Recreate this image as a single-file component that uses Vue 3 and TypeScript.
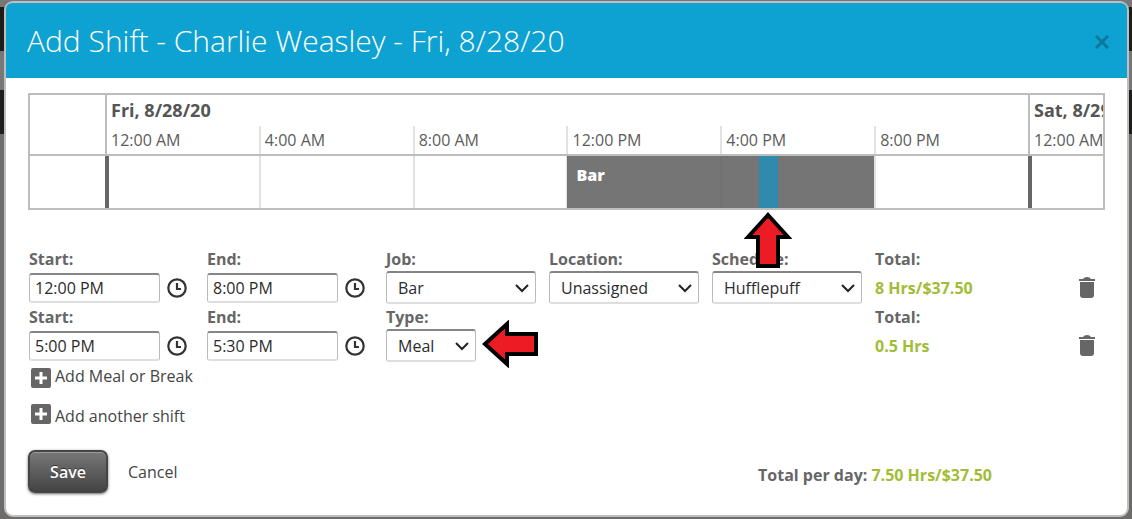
<script setup lang="ts">
import { ref } from 'vue'

interface Slot { label: string; day?: string }

const slots: Slot[] = [
  { label: '12:00 AM', day: 'Fri, 8/28/20' },
  { label: '4:00 AM' },
  { label: '8:00 AM' },
  { label: '12:00 PM' },
  { label: '4:00 PM' },
  { label: '8:00 PM' },
  { label: '12:00 AM', day: 'Sat, 8/29/20' },
]

const shift = { start: 12, end: 20 }
const meal = { start: 17, end: 17.5 }
const shiftHours = shift.end - shift.start
const mealStyle = {
  left: `${((meal.start - shift.start) / shiftHours) * 100}%`,
  width: `${((meal.end - meal.start) / shiftHours) * 100}%`,
}

const shiftStart = ref('12:00 PM')
const shiftEnd = ref('8:00 PM')
const mealStart = ref('5:00 PM')
const mealEnd = ref('5:30 PM')
const job = ref('Bar')
const location = ref('Unassigned')
const schedule = ref('Hufflepuff')
const breakType = ref('Meal')
</script>

<template>
  <div class="backdrop">
    <section class="modal" role="dialog" aria-labelledby="modal-title">
      <header class="modal-header">
        <h1 id="modal-title">Add Shift - Charlie Weasley - Fri, 8/28/20</h1>
        <button class="close" type="button" aria-label="Close">
          <svg width="14" height="14" viewBox="0 0 14 14"><path d="M1 1L13 13M13 1L1 13" fill="none" stroke="currentColor" stroke-width="3" /></svg>
        </button>
      </header>

      <form class="modal-body" @submit.prevent>
        <div class="timeline">
          <div class="lane scale">
            <div class="corner"></div>
            <div v-for="(slot, i) in slots" :key="i" class="slot" :class="{ day: slot.day }">
              <strong v-if="slot.day">{{ slot.day }}</strong>
              <span class="hour">{{ slot.label }}</span>
            </div>
          </div>
          <div class="lane track">
            <div class="corner"></div>
            <div v-for="(slot, i) in slots" :key="i" class="cell" :class="{ day: slot.day }" :style="{ gridColumn: i + 2 }"></div>
            <div class="shift-bar">
              Bar
              <div class="meal" :style="mealStyle">
                <svg class="arrow-up" width="48" height="57" viewBox="0 0 48 57"><path d="M24 3L44 25H34V54H14V25H4Z" fill="#ed1c24" stroke="#000" stroke-width="4" /></svg>
              </div>
            </div>
          </div>
        </div>

        <div class="entries">
          <div class="entry">
            <div class="field">
              <label for="shift-start">Start:</label>
              <div class="control time">
                <input id="shift-start" v-model="shiftStart" type="text" />
                <svg class="clock" width="20" height="20" viewBox="0 0 20 20"><circle cx="10" cy="10" r="8.7" /><path d="M10 5V11H14" /></svg>
              </div>
            </div>
            <div class="field">
              <label for="shift-end">End:</label>
              <div class="control time">
                <input id="shift-end" v-model="shiftEnd" type="text" />
                <svg class="clock" width="20" height="20" viewBox="0 0 20 20"><circle cx="10" cy="10" r="8.7" /><path d="M10 5V11H14" /></svg>
              </div>
            </div>
            <div class="field">
              <label for="job">Job:</label>
              <div class="control pick">
                <select id="job" v-model="job"><option>Bar</option></select>
                <svg class="chevron" width="14" height="9" viewBox="0 0 14 9"><path d="M1 1L7 7L13 1" /></svg>
              </div>
            </div>
            <div class="field">
              <label for="location">Location:</label>
              <div class="control pick">
                <select id="location" v-model="location"><option>Unassigned</option></select>
                <svg class="chevron" width="14" height="9" viewBox="0 0 14 9"><path d="M1 1L7 7L13 1" /></svg>
              </div>
            </div>
            <div class="field">
              <label for="schedule">Schedule:</label>
              <div class="control pick">
                <select id="schedule" v-model="schedule"><option>Hufflepuff</option></select>
                <svg class="chevron" width="14" height="9" viewBox="0 0 14 9"><path d="M1 1L7 7L13 1" /></svg>
              </div>
            </div>
            <div class="field">
              <span class="caption">Total:</span>
              <div class="control total">8 Hrs/$37.50</div>
            </div>
            <button class="trash" type="button" aria-label="Delete shift">
              <svg width="16" height="21" viewBox="0 0 16 21"><path d="M0 2H4Q5 0 8 0T12 2H16V4H0ZM1 5H15V18Q15 21 12 21H4Q1 21 1 18Z" /></svg>
            </button>
          </div>

          <div class="entry">
            <div class="field">
              <label for="meal-start">Start:</label>
              <div class="control time">
                <input id="meal-start" v-model="mealStart" type="text" />
                <svg class="clock" width="20" height="20" viewBox="0 0 20 20"><circle cx="10" cy="10" r="8.7" /><path d="M10 5V11H14" /></svg>
              </div>
            </div>
            <div class="field">
              <label for="meal-end">End:</label>
              <div class="control time">
                <input id="meal-end" v-model="mealEnd" type="text" />
                <svg class="clock" width="20" height="20" viewBox="0 0 20 20"><circle cx="10" cy="10" r="8.7" /><path d="M10 5V11H14" /></svg>
              </div>
            </div>
            <div class="field">
              <label for="break-type">Type:</label>
              <div class="control pick short">
                <select id="break-type" v-model="breakType"><option>Meal</option><option>Break</option></select>
                <svg class="chevron" width="14" height="9" viewBox="0 0 14 9"><path d="M1 1L7 7L13 1" /></svg>
                <svg class="arrow-left" width="57" height="48" viewBox="0 0 57 48"><path d="M3 24L25 4V14H54V34H25V44Z" fill="#ed1c24" stroke="#000" stroke-width="4" /></svg>
              </div>
            </div>
            <div class="field summary">
              <span class="caption">Total:</span>
              <div class="control total">0.5 Hrs</div>
            </div>
            <button class="trash" type="button" aria-label="Delete meal">
              <svg width="16" height="21" viewBox="0 0 16 21"><path d="M0 2H4Q5 0 8 0T12 2H16V4H0ZM1 5H15V18Q15 21 12 21H4Q1 21 1 18Z" /></svg>
            </button>
          </div>
        </div>

        <div class="adders">
          <button class="add low" type="button">
            <svg width="20" height="20" viewBox="0 0 20 20"><rect width="20" height="20" rx="2" fill="#666" /><path d="M10 4V16M4 10H16" stroke="#fff" stroke-width="3" /></svg>
            <span>Add Meal or Break</span>
          </button>
          <button class="add" type="button">
            <svg width="20" height="20" viewBox="0 0 20 20"><rect width="20" height="20" rx="2" fill="#666" /><path d="M10 4V16M4 10H16" stroke="#fff" stroke-width="3" /></svg>
            <span>Add another shift</span>
          </button>
        </div>

        <footer class="actions">
          <button class="save" type="submit">Save</button>
          <a class="cancel" href="#">Cancel</a>
          <p class="day-total">Total per day: <span>7.50 Hrs/$37.50</span></p>
        </footer>
      </form>
    </section>
  </div>
</template>

<style>
body {
  margin: 0;
}
</style>

<style scoped>
* {
  box-sizing: border-box;
}
.backdrop {
  min-height: 100vh;
  padding: 1px 3px 2px 4px;
  background: linear-gradient(#777 7px, #1f1d1b 7px 51px, #777 51px 90px, #1f1d1b 90px 134px, #6d6c6b 134px);
  font-family: "Open Sans", "Noto Sans", sans-serif;
  font-size: 16px;
  line-height: 24px;
  color: #333;
}
.modal {
  border: 2px solid #bfbfbf;
  border-radius: 9px;
  background: #fff;
}
.modal-header {
  display: flex;
  align-items: center;
  justify-content: space-between;
  height: 75px;
  padding: 0 18px 0 21px;
  border-radius: 6px 6px 0 0;
  background: #0da2d1;
}
h1 {
  margin: 0;
  font-size: 30px;
  font-weight: 300;
  line-height: 40px;
  color: #fff;
}
.close {
  display: flex;
  margin-top: 3px;
  padding: 0;
  border: 0;
  background: none;
  color: #08799d;
}
.modal-body {
  padding: 15px 22px 22px;
}
.timeline {
  border: 2px solid #bdbdbd;
}
.lane {
  display: grid;
  grid-template-columns: 75px repeat(6, minmax(0, 1fr)) 75px;
}
.scale {
  height: 61px;
  border-bottom: 2px solid #bdbdbd;
  color: #555;
}
.slot {
  position: relative;
  display: flex;
  flex-direction: column;
  justify-content: flex-end;
  height: 28px;
  margin-top: 31px;
  padding: 0 0 2px 4px;
  border-left: 2px solid #e2e2e2;
  white-space: nowrap;
}
.slot.day {
  overflow: hidden;
  height: 59px;
  margin-top: 0;
  border-color: #bdbdbd;
}
.slot strong {
  margin-bottom: 6px;
  font-size: 18px;
  font-weight: 700;
}
.hour {
  color: #5c5c5c;
}
.track {
  height: 52px;
}
.track > * {
  grid-row: 1;
}
.cell {
  border-left: 2px solid #e2e2e2;
}
.cell.day {
  border-left: 4px solid #666;
}
.shift-bar {
  position: relative;
  grid-column: 5 / 7;
  margin-left: 1px;
  padding: 7px 9px;
  background: rgba(102, 102, 102, 0.9);
  color: #fff;
  font-weight: 800;
}
.meal {
  position: absolute;
  top: 0;
  bottom: 0;
  background: #308aad;
}
.arrow-up {
  position: absolute;
  top: calc(100% + 4px);
  left: 50%;
  margin-left: -25px;
}
.entries {
  margin: 37px 0 0 1px;
}
.entry {
  display: grid;
  grid-template-columns: 178px 179px repeat(3, 163px) 1fr auto;
  height: 58px;
}
.summary {
  grid-column: 6;
}
label,
.caption {
  display: block;
  font-weight: 700;
  color: #666;
}
.control {
  display: flex;
  align-items: center;
  height: 33px;
}
.time {
  gap: 7px;
}
input,
select {
  border: 1px solid #bbb;
  border-top: 2px solid #858585;
  border-bottom: 2px solid #dedede;
  border-radius: 3px;
  background: #fff;
  color: #2c2c2c;
  font: inherit;
}
input {
  width: 131px;
  height: 30px;
  padding: 0 5px;
}
.clock {
  fill: none;
  stroke: #333;
  stroke-width: 2.2;
}
.pick {
  position: relative;
  width: 150px;
}
.short {
  width: 90px;
}
select {
  width: 100%;
  height: 33px;
  padding: 0 11px;
  appearance: none;
}
.chevron {
  position: absolute;
  right: 7px;
  top: 13px;
  fill: none;
  stroke: #222;
  stroke-width: 2;
  pointer-events: none;
}
.arrow-left {
  position: absolute;
  left: calc(100% + 6px);
  top: -9px;
}
.total {
  font-weight: 700;
  color: #a1bd37;
}
.trash {
  align-self: end;
  margin-right: 10px;
  padding: 0 0 7px;
  border: 0;
  background: none;
  fill: #666;
}
.trash svg,
.add svg {
  display: block;
}
.adders {
  display: grid;
  justify-items: start;
  gap: 16px;
  margin: 1px 0 0 3px;
}
.add {
  display: flex;
  gap: 4px;
  padding: 0;
  border: 0;
  background: none;
  color: #444;
  font: inherit;
}
.low {
  align-items: flex-end;
}
.actions {
  display: flex;
  align-items: center;
  margin-top: 22px;
}
.save {
  width: 80px;
  height: 43px;
  border: 2px solid #444;
  border-radius: 7px;
  background: linear-gradient(#777, #444);
  box-shadow: 0 1px 3px rgba(0, 0, 0, 0.6), inset 0 1px 0 #999;
  color: #fff;
  font: inherit;
  font-weight: 600;
  text-shadow: 0 -1px 0 #333;
}
.cancel {
  margin-left: 20px;
  color: #444;
  text-decoration: none;
}
.day-total {
  margin: 6px 113px 0 auto;
  font-weight: 700;
  color: #666;
}
.day-total span {
  color: #a1bd37;
}
</style>
